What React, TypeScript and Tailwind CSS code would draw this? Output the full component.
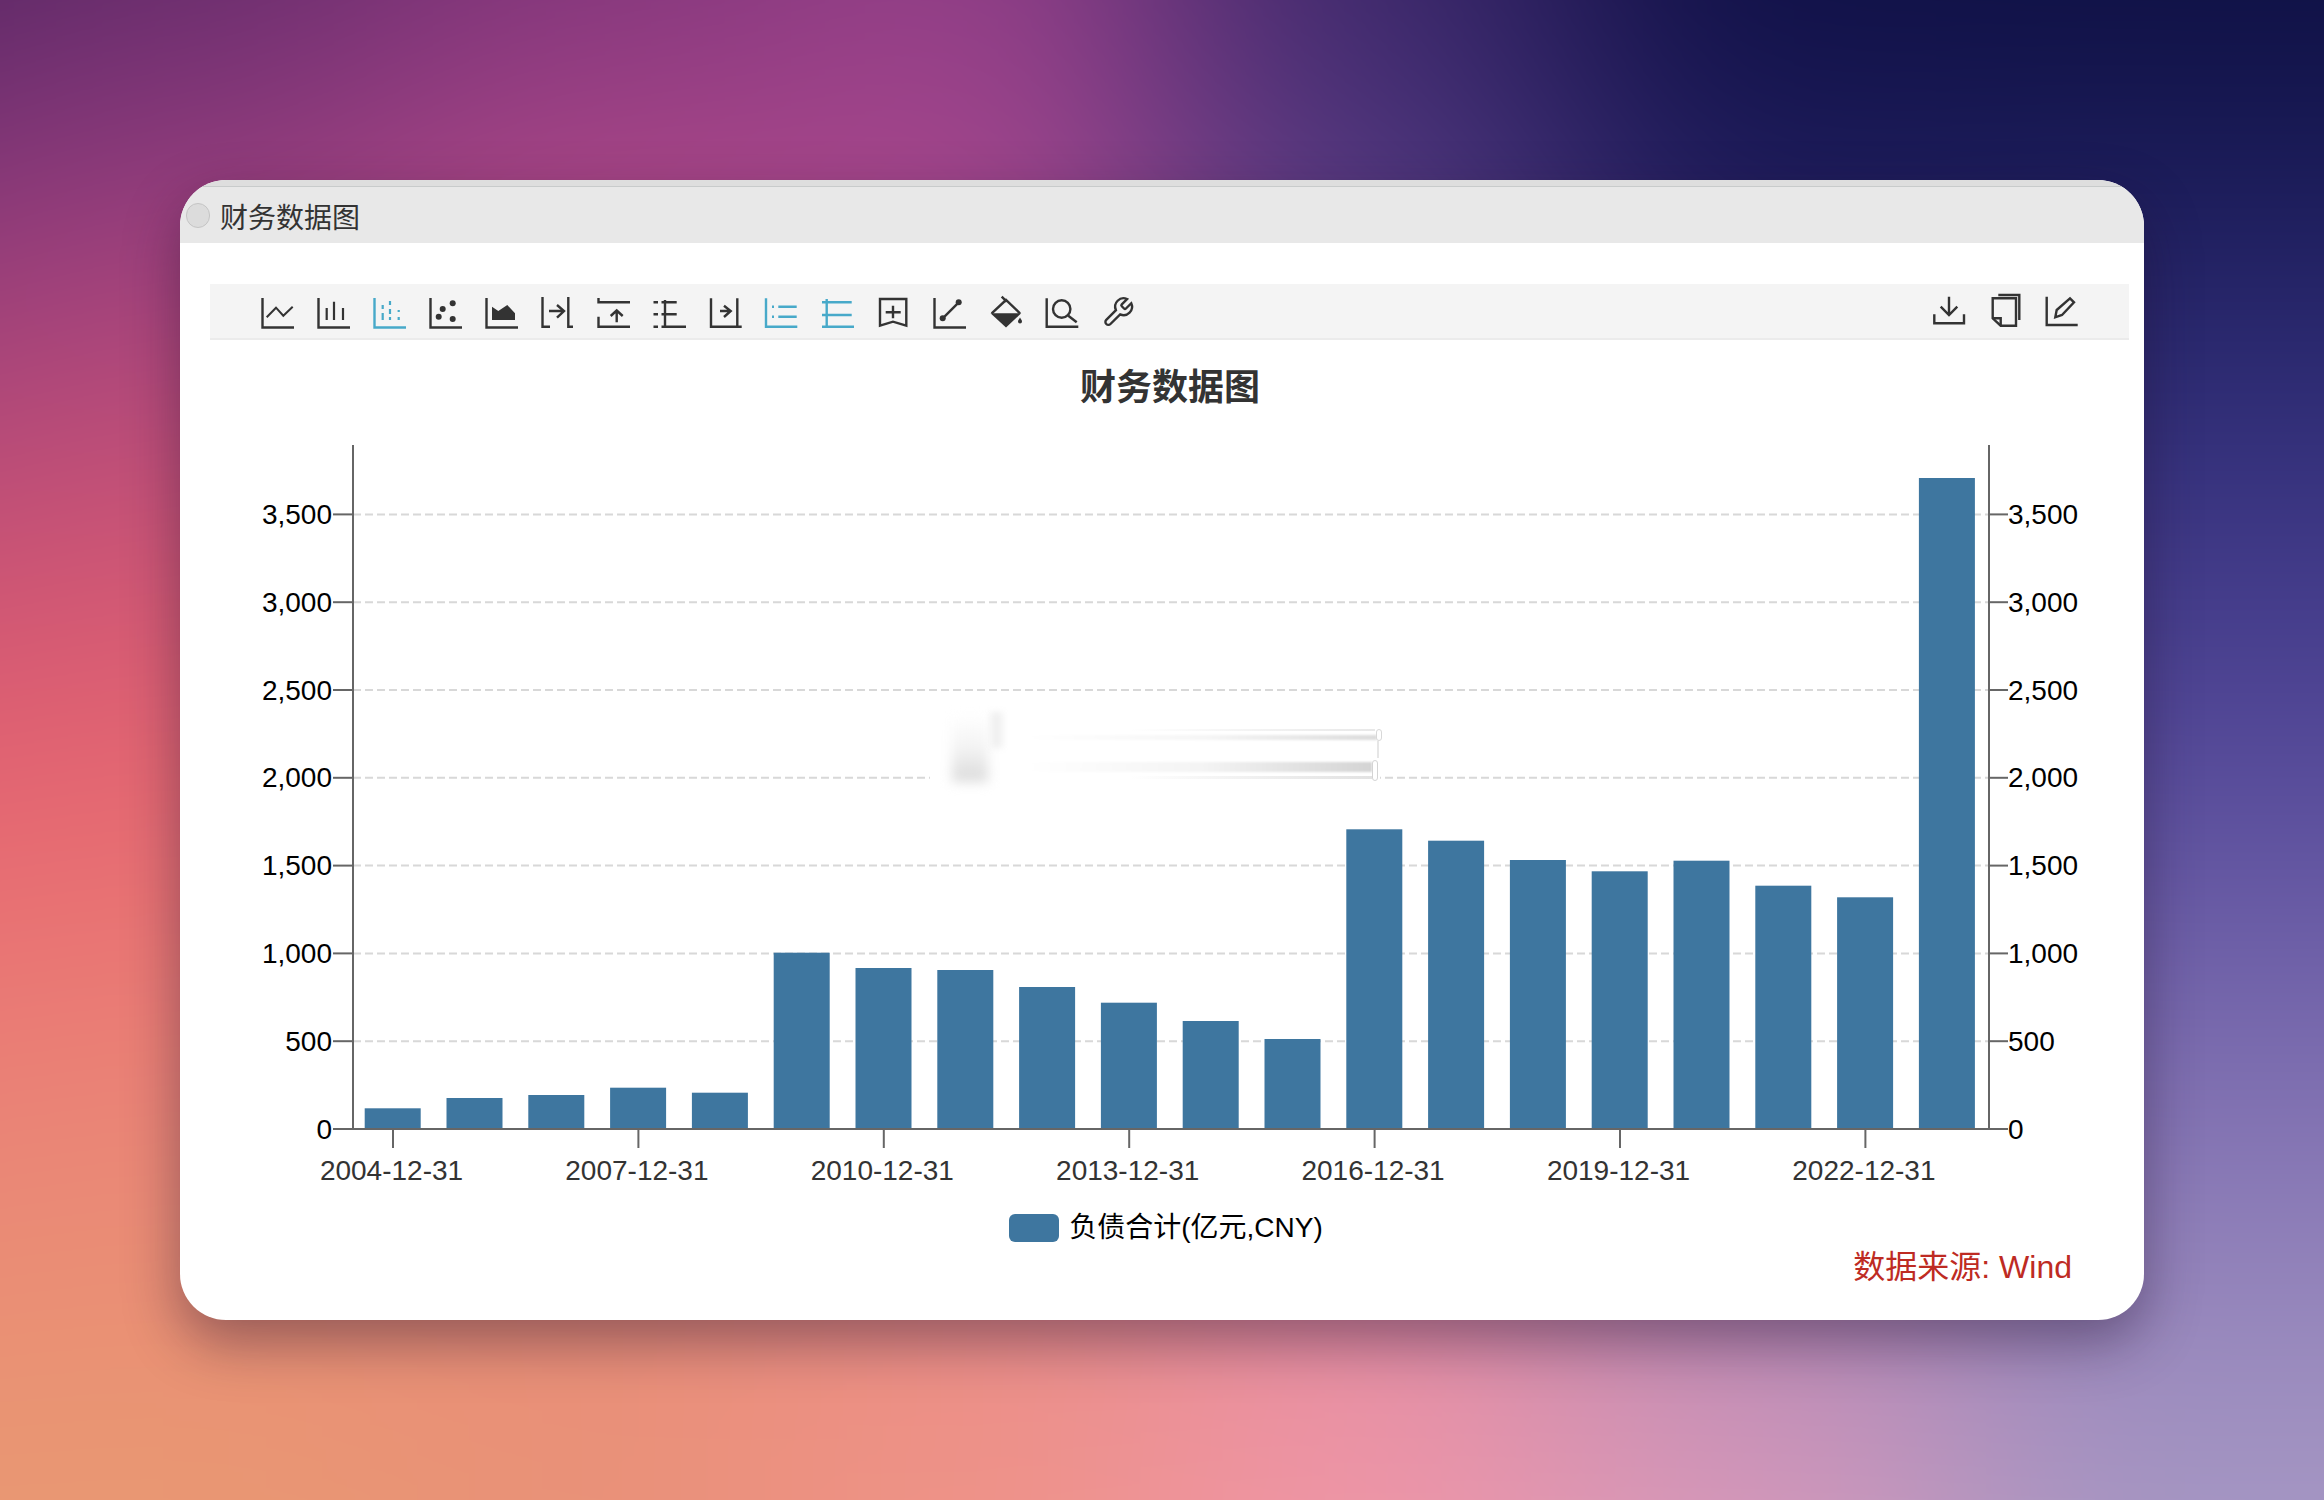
import React from 'react';

const DARK = '#333333';
const BLUE = '#47a9c9';

const barTops = [
  1108.3, 1098, 1095, 1087.7, 1092.7, 952.7, 968, 970, 987, 1002.7, 1021, 1039,
  829.3, 840.7, 860, 871.3, 860.7, 885.7, 897.3, 478,
];
const yLabels = ['0', '500', '1,000', '1,500', '2,000', '2,500', '3,000', '3,500'];
const xLabels = ['2004-12-31', '2007-12-31', '2010-12-31', '2013-12-31', '2016-12-31', '2019-12-31', '2022-12-31'];

const AXIS_LEFT = 353;
const AXIS_RIGHT = 1989;
const AXIS_BOTTOM = 1129;
const BAND = 81.8;
const yAt = (i: number) => AXIS_BOTTOM - 87.8 * i;

const Icon = ({ children, color = DARK }: { children: React.ReactNode; color?: string }) => (
  <svg
    width="34"
    height="32"
    viewBox="0 0 34 32"
    fill="none"
    stroke={color}
    strokeWidth="2.4"
    className="block shrink-0 overflow-visible"
  >
    {children}
  </svg>
);

const leftIcons: React.ReactNode[] = [
  <Icon key="line">
    <path d="M1.5 1V30.5H33" />
    <path d="M5.7 20.3L15 10.7L22.3 18.7L31.7 9.7" strokeWidth="2" />
  </Icon>,
  <Icon key="bar">
    <path d="M1.5 1V30.5H33" />
    <path d="M9.7 11V23M17 4.7V23M26 11V23" strokeWidth="2.2" />
  </Icon>,
  <Icon key="stack" color={BLUE}>
    <path d="M1.5 1V30.5H33" />
    <path d="M9.7 8V12M9.7 16V23M17 4V8M17 12V17M17 20V23M25.7 13V15M25.7 20V23" strokeWidth="2.2" />
  </Icon>,
  <Icon key="scatter">
    <path d="M1.5 1V30.5H33" />
    <g fill={DARK} stroke="none">
      <circle cx="13.7" cy="12" r="3" />
      <circle cx="23.7" cy="6.3" r="3" />
      <circle cx="9.7" cy="19.7" r="3" />
      <circle cx="23.7" cy="22" r="3" />
    </g>
  </Icon>,
  <Icon key="area">
    <path d="M1.5 1V30.5H33" />
    <path d="M7 23V9.7L13.3 14L22.3 8L30 16.3V23Z" fill={DARK} stroke="none" />
  </Icon>,
  <Icon key="to-right">
    <path d="M1.5 0V29.7H9M27.3 0V29.7H32" />
    <path d="M8 14H22.5M16 8L23 14L16 20.7" />
  </Icon>,
  <Icon key="to-top">
    <path d="M1.5 1V5.3H33M1.5 19.7V29.7H33" />
    <path d="M19.7 25.3V14M13.7 19L19.7 13.5L25.7 19" />
  </Icon>,
  <Icon key="dotted">
    <path d="M0.5 5.3H5M0.5 17.3H5M0.5 29.7H5M12 3V29.7M8.5 5.3H23.7M8.5 17.3H23.7M8.5 29.7H33" />
  </Icon>,
  <Icon key="end">
    <path d="M2 1.3V29.7H32.7M28.3 1.3V29.7" />
    <path d="M11 14H21.7M15 8.7L21.7 14L15 20" />
  </Icon>,
  <Icon key="mark-point" color={BLUE}>
    <path d="M1 1.3V29.7H32.3M13.3 9.7H31.7M13.3 19.7H31.7" />
    <path d="M7 9.7H9M7 19.7H9" />
  </Icon>,
  <Icon key="mark-line" color={BLUE}>
    <path d="M5.7 2V29.7M1 5.3H30.7M1 18H30.7M1 29.7H33" />
  </Icon>,
  <Icon key="mark-box">
    <path d="M3 2H29.3V28.7L16 24.7L3 28.7Z" />
    <path d="M16 8.7V21.3M8.7 15.3H23.7" />
  </Icon>,
  <Icon key="line-mark">
    <path d="M1.5 1V30.5H33" />
    <path d="M9.7 21.3L25.7 5.3" />
    <circle cx="9.7" cy="21.3" r="3" fill={DARK} stroke="none" />
    <circle cx="25.7" cy="5.3" r="3" fill={DARK} stroke="none" />
  </Icon>,
  <Icon key="fill">
    <path d="M12.7 -0.3L17.7 4.7M2.7 16.3L17 3L31 16.3" />
    <path d="M1.5 16.3H32.2L17 30.5Z" fill={DARK} stroke="none" />
    <path d="M31 20.5C32 22.2 33 23.2 33 24.6A2 2 0 0 1 29 24.6C29 23.2 30 22.2 31 20.5Z" fill={DARK} stroke="none" />
  </Icon>,
  <Icon key="zoom">
    <path d="M1.7 1.3V29.7H33.3" />
    <circle cx="16.7" cy="12" r="8.7" />
    <path d="M23.3 18.7L31.7 25.3" />
  </Icon>,
  <Icon key="wrench">
    <g transform="translate(0.2 -1.5) scale(1.4)">
      <path
        d="M14.7 6.3a1 1 0 0 0 0 1.4l1.6 1.6a1 1 0 0 0 1.4 0l3.77-3.77a6 6 0 0 1-7.94 7.94l-6.91 6.91a2.12 2.12 0 0 1-3-3l6.91-6.91a6 6 0 0 1 7.94-7.94l-3.76 3.76z"
        strokeWidth="1.7"
      />
    </g>
  </Icon>,
];

const rightIcons: React.ReactNode[] = [
  <Icon key="download">
    <path d="M1.3 17.3V26.3H31V17.3" />
    <path d="M16 -0.3V17M7.7 9.7L16 18L24.3 9.7" />
  </Icon>,
  <Icon key="copy">
    <path d="M3.7 1.3H27V28.7H11.7L3.7 21.3Z" />
    <path d="M3.7 21.3H11.7V28.7M9.3 -2H30.3V23" />
  </Icon>,
  <Icon key="edit">
    <path d="M1.7 -0.3V28H32.7" />
    <path d="M10.3 20.3L11.7 13L25 1.3L29 5.3L17 18Z" />
  </Icon>,
];

function Chart() {
  return (
    <div className="relative h-[754px]">
      <svg viewBox="180 436 1964 754" width="1964" height="754" className="block">
        {yLabels.map((_, i) =>
          i > 0 ? (
            <line
              key={i}
              x1={AXIS_LEFT}
              x2={AXIS_RIGHT}
              y1={yAt(i)}
              y2={yAt(i)}
              stroke="#d8d8d8"
              strokeWidth="2"
              strokeDasharray="8 4"
            />
          ) : null,
        )}
        {barTops.map((top, i) => (
          <rect
            key={i}
            x={364.7 + BAND * i}
            y={top}
            width="56"
            height={AXIS_BOTTOM - top}
            fill="#3e769f"
          />
        ))}
        <g stroke="#666666" strokeWidth="2">
          <line x1={AXIS_LEFT} x2={AXIS_LEFT} y1="445" y2={AXIS_BOTTOM} />
          <line x1={AXIS_RIGHT} x2={AXIS_RIGHT} y1="445" y2={AXIS_BOTTOM} />
          <line x1={AXIS_LEFT} x2={AXIS_RIGHT} y1={AXIS_BOTTOM} y2={AXIS_BOTTOM} />
          {yLabels.map((_, i) => (
            <g key={i}>
              <line x1={AXIS_LEFT - 20} x2={AXIS_LEFT} y1={yAt(i)} y2={yAt(i)} />
              <line x1={AXIS_RIGHT} x2={AXIS_RIGHT + 19} y1={yAt(i)} y2={yAt(i)} />
            </g>
          ))}
          {xLabels.map((_, i) => (
            <line key={i} x1={393 + 245.4 * i} x2={393 + 245.4 * i} y1={AXIS_BOTTOM} y2="1148" />
          ))}
        </g>
        <g className="text-[28px]" fill="#000000">
          {yLabels.map((label, i) => (
            <g key={label}>
              <text x="332" y={yAt(i) + 9.5} textAnchor="end">
                {label}
              </text>
              <text x="2008" y={yAt(i) + 9.5}>
                {label}
              </text>
            </g>
          ))}
        </g>
        <g className="text-[28px]" fill={DARK}>
          {xLabels.map((label, i) => (
            <text key={label} x={391.5 + 245.4 * i} y="1179.5" textAnchor="middle">
              {label}
            </text>
          ))}
        </g>
      </svg>

      {/* smudged-out watermark over the 2,000 grid line */}
      <div className="absolute left-[750px] top-[276px] h-[74px] w-[450px] bg-white">
        <div className="absolute left-[22px] top-[2px] h-[68px] w-[36px] bg-gradient-to-b from-white via-[#f3f3f3] to-[#dadada] blur-[6px]" />
        <div className="absolute left-[60px] top-0 h-[36px] w-[13px] bg-[#f1f1f1] blur-[3px]" />
        <div className="absolute left-[200px] top-[17px] h-[2px] w-[245px] bg-gradient-to-r from-white to-[#e8e8e8]" />
        <div className="absolute left-[100px] top-[23px] h-[5px] w-[347px] bg-gradient-to-r from-white via-[#f6f6f6] to-[#dcdcdc] blur-[1px]" />
        <div className="absolute left-[100px] top-[50px] h-[10px] w-[342px] bg-gradient-to-r from-white via-[#f4f4f4] to-[#d4d4d4] blur-[1px]" />
        <div className="absolute left-[200px] top-[64px] h-[3px] w-[242px] bg-gradient-to-r from-white to-[#e2e2e2]" />
        <div className="absolute left-[446px] top-[17px] h-[12px] w-[6px] rounded-sm border border-[#d8d8d8] bg-white" />
        <div className="absolute left-[447px] top-[29px] h-[17px] w-[2px] bg-[#e6e6e6]" />
        <div className="absolute left-[442px] top-[48px] h-[21px] w-[6px] rounded-sm border border-[#d4d4d4] bg-white" />
      </div>
    </div>
  );
}

export default function App() {
  return (
    <div className="relative h-[1500px] w-full overflow-hidden pl-[180px] pt-[180px] font-['Liberation_Sans','Noto_Sans_CJK_SC',sans-serif]">
      {/* wallpaper */}
      <div className="absolute -inset-[400px] flex blur-[130px]">
        <div className="flex-1 bg-[linear-gradient(180deg,#46205a_15%,#522663_17%,#7c3378_24%,#a8447a_34%,#e65f70_50%,#ec8478_66%,#e99a72_83%)]" />
        <div className="flex-1 bg-[linear-gradient(180deg,#5c2866_15%,#6a2e6e_17%,#8c3a80_24%,#b84a7a_34%,#e86470_50%,#ec8878_66%,#e99a72_83%)]" />
        <div className="flex-1 bg-[linear-gradient(180deg,#7a3278_15%,#80367c_17%,#a8468a_24%,#c04c82_34%,#e0707a_50%,#e98a78_66%,#ea9378_83%)]" />
        <div className="flex-1 bg-[linear-gradient(180deg,#8a3c84_15%,#933f88_17%,#a8468e_24%,#a84a8a_34%,#c86a88_50%,#e88886_66%,#f09488_83%)]" />
        <div className="flex-1 bg-[linear-gradient(180deg,#3a2668_15%,#402a6e_17%,#4c347c_24%,#6a4a90_34%,#a06a9c_55%,#e088a0_70%,#f298a8_83%)]" />
        <div className="flex-1 bg-[linear-gradient(180deg,#0e0f44_15%,#0f1046_17%,#1a1856_24%,#3a3480_40%,#6a5aa2_55%,#a880b0_70%,#dc9cbc_83%)]" />
        <div className="flex-1 bg-[linear-gradient(180deg,#0d0f42_15%,#0d0f42_17%,#191a55_24%,#2e2c76_34%,#54489a_50%,#8474b4_66%,#a99ac5_83%)]" />
        <div className="flex-1 bg-[linear-gradient(180deg,#0d0f42_17%,#191a55_24%,#2e2c76_34%,#54489a_50%,#8474b4_66%,#a99ac5_83%)]" />
      </div>

      {/* window */}
      <div className="relative flex h-[1140px] w-[1964px] flex-col overflow-hidden rounded-[46px] bg-white text-[#333333] shadow-[0_22px_55px_rgba(30,15,45,0.42)]">
        <div className="h-[7px] shrink-0 border-b border-[#c8cbcb] bg-[#dedede]" />
        <div className="flex h-[56px] shrink-0 items-center gap-[10px] bg-[#e8e8e8] pl-[6px]">
          <span className="h-[25px] w-[24px] rounded-full border border-[#c4c4c4] bg-[#dcdcdc]" />
          <span className="mt-[7px] text-[28px] leading-none">财务数据图</span>
        </div>

        <div className="ml-[30px] mr-[15px] mt-[41px] flex h-[56px] shrink-0 items-start justify-between border-b-2 border-[#ebebeb] bg-[#f4f4f4] pl-[51px] pr-[50px] pt-[13px]">
          <div className="flex gap-[22px]">{leftIcons}</div>
          <div className="flex gap-[22px]">{rightIcons}</div>
        </div>

        <div className="flex h-[96px] shrink-0 items-center justify-center pl-[16px] text-[36px] font-bold leading-none">
          财务数据图
        </div>

        <Chart />

        <div className="mt-[24px] flex h-[28px] items-center justify-center gap-[10px] pl-[8px]">
          <span className="h-[28px] w-[50px] rounded-[6px] bg-[#3e769f]" />
          <span className="text-[28px] leading-none text-black">负债合计(亿元,CNY)</span>
        </div>

        <div className="mt-[5px] pr-[72px] text-right text-[32px] leading-[40px] text-[#be2b23]">
          数据来源: Wind
        </div>
      </div>
    </div>
  );
}
